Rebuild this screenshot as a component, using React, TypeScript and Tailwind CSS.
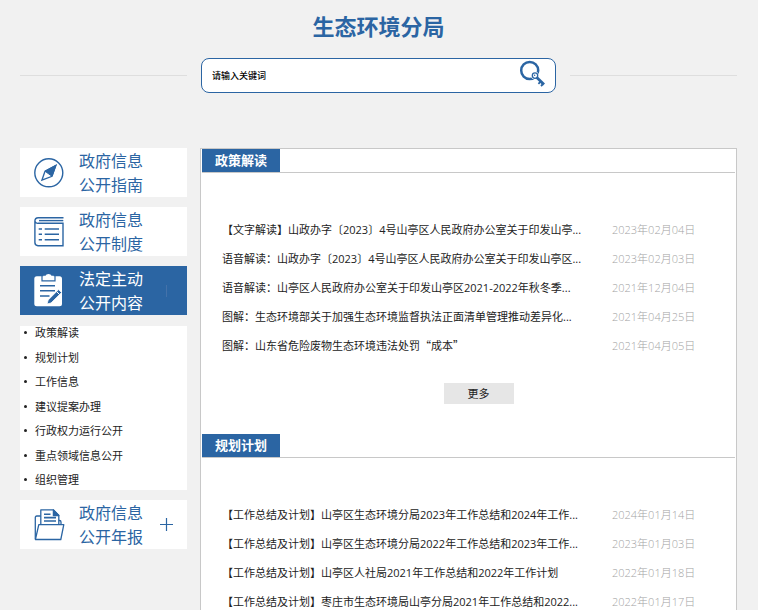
import type { ReactNode } from 'react';

type Article = { title: string; date: string };

const policies: Article[] = [
  {
    title: '【文字解读】山政办字〔2023〕4号山亭区人民政府办公室关于印发山亭...',
    date: '2023年02月04日',
  },
  {
    title: '语音解读：山政办字〔2023〕4号山亭区人民政府办公室关于印发山亭区...',
    date: '2023年02月03日',
  },
  {
    title: '语音解读：山亭区人民政府办公室关于印发山亭区2021-2022年秋冬季...',
    date: '2021年12月04日',
  },
  {
    title: '图解：生态环境部关于加强生态环境监督执法正面清单管理推动差异化...',
    date: '2021年04月25日',
  },
  {
    title: '图解：山东省危险废物生态环境违法处罚“成本”',
    date: '2021年04月05日',
  },
];

const plans: Article[] = [
  {
    title: '【工作总结及计划】山亭区生态环境分局2023年工作总结和2024年工作...',
    date: '2024年01月14日',
  },
  {
    title: '【工作总结及计划】山亭区生态环境分局2022年工作总结和2023年工作...',
    date: '2023年01月03日',
  },
  {
    title: '【工作总结及计划】山亭区人社局2021年工作总结和2022年工作计划',
    date: '2022年01月18日',
  },
  {
    title: '【工作总结及计划】枣庄市生态环境局山亭分局2021年工作总结和2022...',
    date: '2022年01月17日',
  },
];

const topics = [
  '政策解读',
  '规划计划',
  '工作信息',
  '建议提案办理',
  '行政权力运行公开',
  '重点领域信息公开',
  '组织管理',
];

const SearchKeyIcon = () => (
  <svg width="26" height="27" viewBox="0 0 26 27" fill="none" stroke="#2b65a3">
    <circle cx="10.7" cy="10.5" r="8.5" strokeWidth="2.5" />
    <circle cx="16" cy="15.6" r="3.6" fill="#fff" stroke="#fff" />
    <circle cx="16" cy="15.6" r="2.7" strokeWidth="1.3" />
    <circle cx="15.6" cy="15.2" r="0.8" fill="#2b65a3" stroke="none" />
    <path d="M17.8 17.4 25 24.6" strokeWidth="2.8" />
    <path d="m21.6 21.6-2.2 2.2M24 24l-2 2" strokeWidth="1.8" />
  </svg>
);

const CompassIcon = () => (
  <svg width="30" height="30" viewBox="0 0 30 30" fill="none" stroke="#2b65a3">
    <circle cx="14.8" cy="14.8" r="14" strokeWidth="1.4" />
    <path d="M22 7.2 11 13.2 7.9 22.2 18 18.3Z" strokeWidth="1.3" />
    <path d="M22 7.2 11 13.2 18 18.3Z" fill="#2b65a3" />
  </svg>
);

const BookIcon = () => (
  <svg
    width="30"
    height="30"
    viewBox="0 0 30 30"
    fill="none"
    stroke="#2b65a3"
    strokeWidth="1.4"
  >
    <path d="M29.5.8H4.2A3.3 3.3 0 0 0 .9 4v21.5A3.2 3.2 0 0 0 4 28.7h25V6.3H4.2A2.8 2.8 0 0 1 .9 3.8" />
    <path d="M5 3.6h24.3" />
    <path d="M4.7 12H8M10.7 12H25M4.7 17.3H8M10.7 17.3H25M4.7 22.7H8M10.7 22.7H25" />
  </svg>
);

const ClipboardIcon = () => (
  <svg width="30" height="33" viewBox="0 0 30 33" fill="none">
    <rect x="0.3" y="2.3" width="27.7" height="30" rx="2.5" fill="#fff" />
    <path d="M8 2v4.8h13V2" stroke="#2b65a3" strokeWidth="1.2" />
    <path d="M9.3 1.8h2.2Q12 0 14.5 0t3 1.8h2.2v4H9.3Z" fill="#fff" />
    <path
      d="M6 11.7h15M6 16.8h15M6 22h9.5"
      stroke="#2b65a3"
      strokeWidth="1.5"
    />
    <path
      d="m13 30 1.2-4L24.6 15.6l3 3L17 29Z"
      fill="#2b65a3"
      stroke="#fff"
      strokeWidth="0.8"
    />
    <path d="m22.6 17.6 3 3" stroke="#fff" />
  </svg>
);

const FolderIcon = () => (
  <svg
    width="31"
    height="32"
    viewBox="0 0 31 32"
    fill="none"
    stroke="#2b65a3"
    strokeWidth="1.3"
    strokeLinejoin="round"
  >
    <path d="M1.3 30V8.5Q1.3 7 2.8 7h3.9M24.8 11.5h.7q1.5 0 1.5 1.5v2.5" />
    <path d="M6.8 15.5V.9h12.6l5.4 5.6v9" />
    <path d="M19.4.9v5.6h5.4Z" fill="#2b65a3" />
    <path d="M10 5.3h6.5M10 8.6h12M10 12h12" strokeWidth="1.6" />
    <path d="M4.8 15.7h25L26.8 30.5H1.4Z" fill="#fff" />
  </svg>
);

type MenuItemProps = {
  icon: ReactNode;
  lines: [string, string];
  active?: boolean;
  children?: ReactNode;
};

const MenuItem = ({ icon, lines, active, children }: MenuItemProps) => (
  <a
    href="#"
    className={`flex h-[49px] items-center pl-3.5 text-base leading-6 ${
      active ? 'bg-[#2b65a3] text-white' : 'bg-white text-[#2b65a3]'
    }`}
  >
    <span className="w-[45px] shrink-0">{icon}</span>
    <span>
      {lines[0]}
      <br />
      {lines[1]}
    </span>
    {children}
  </a>
);

type SectionProps = {
  title: string;
  items: Article[];
  hasMore?: boolean;
};

const Section = ({ title, items, hasMore }: SectionProps) => (
  <section className="px-px">
    <div className="flex border-b border-[#c8c8c8]">
      <h2 className="bg-[#2b65a3] px-[13px] text-[13px] leading-[23px] font-bold text-white">
        {title}
      </h2>
    </div>
    <ul className="pt-[42px] pr-10 pl-5 text-[11px] leading-[29px]">
      {items.map(({ title, date }) => (
        <li key={title} className="flex justify-between">
          {/* curly quotes are full width in the Chinese face only */}
          <a
            href="#"
            className={`whitespace-nowrap text-[#222] ${
              title.includes('“') ? "font-['Noto_Sans_CJK_SC',sans-serif]" : ''
            }`}
          >
            {title}
          </a>
          <time className="w-[83px] shrink-0 font-light whitespace-nowrap text-[#a4a4a4]">
            {date}
          </time>
        </li>
      ))}
    </ul>
    {hasMore && (
      <div className="flex justify-center pt-[23px] pb-[30px] pl-5">
        <button
          type="button"
          className="bg-[#e6e6e6] px-6 text-[11px] leading-[21px] text-[#222]"
        >
          更多
        </button>
      </div>
    )}
  </section>
);

const App = () => (
  <div className="h-screen overflow-hidden bg-[#f1f1f1] pr-[21px] pl-5 font-['Open_Sans','Noto_Sans_CJK_SC',sans-serif]">
    <header>
      <h1 className="pt-2.5 text-center text-[22px] leading-8 font-bold text-[#2b65a3]">
        生态环境分局
      </h1>
      <div className="mt-4 flex items-center gap-3.5">
        <span className="h-px flex-1 bg-[#dedede]" />
        <form className="flex h-[35px] w-[355px] items-center rounded-lg border border-[#2b65a3] bg-white px-2.5">
          <input
            type="text"
            aria-label="请输入关键词"
            placeholder="请输入关键词"
            className="min-w-0 flex-1 text-[9px] font-medium outline-none placeholder:text-black"
          />
          <button type="button" aria-label="搜索" className="-mt-1">
            <SearchKeyIcon />
          </button>
        </form>
        <span className="h-px flex-1 bg-[#dedede]" />
      </div>
    </header>

    <div className="mt-[55px] flex items-start gap-[13px]">
      <nav className="flex w-[167px] shrink-0 flex-col gap-2.5">
        <MenuItem icon={<CompassIcon />} lines={['政府信息', '公开指南']} />
        <MenuItem icon={<BookIcon />} lines={['政府信息', '公开制度']} />
        <MenuItem
          icon={<ClipboardIcon />}
          lines={['法定主动', '公开内容']}
          active
        >
          <span className="ml-[23px] h-3 w-px bg-[#4472aa]" />
        </MenuItem>
        <ul className="mt-px flex h-[164px] flex-col justify-between bg-white pb-1 text-[11px] leading-[13px] text-[#222]">
          {topics.map((topic) => (
            <li key={topic} className="flex items-center gap-2 pl-1">
              <span className="size-[3px] rounded-full bg-[#222]" />
              <a href="#">{topic}</a>
            </li>
          ))}
        </ul>
        <MenuItem icon={<FolderIcon />} lines={['政府信息', '公开年报']}>
          <svg
            width="13"
            height="13"
            viewBox="0 0 13 13"
            className="ml-[17px]"
            stroke="#2b65a3"
            strokeWidth="1.2"
          >
            <path d="M6.5 0v13M0 6.5h13" />
          </svg>
        </MenuItem>
      </nav>

      <main className="min-w-0 flex-1 border border-[#c8c8c8] bg-white">
        <Section title="政策解读" items={policies} hasMore />
        <Section title="规划计划" items={plans} />
      </main>
    </div>
  </div>
);

export default App;
